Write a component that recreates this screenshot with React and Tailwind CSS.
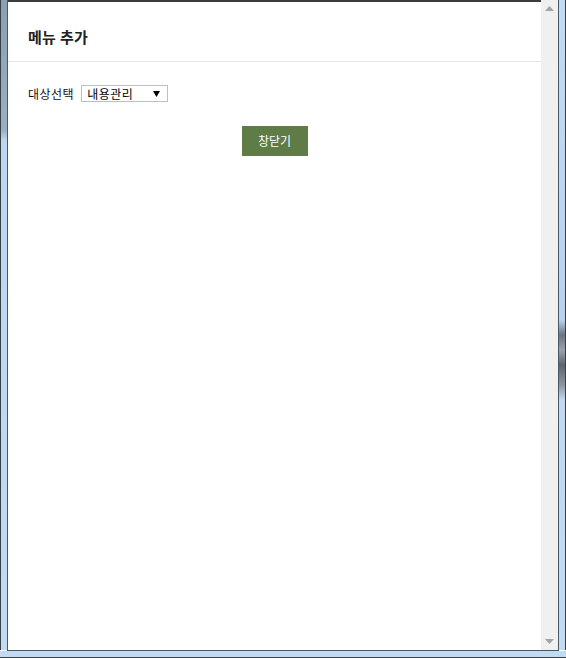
export default function App() {
  const font = { fontFamily: '"Noto Sans CJK KR", "Noto Sans", sans-serif' };
  return (
    <div className="w-[566px] h-[658px] flex flex-col bg-white overflow-hidden" style={font}>
      <div className="flex flex-1 min-h-0">
        {/* left frame */}
        <div className="w-[8px] flex">
          <div className="w-[1px] bg-[#3a3f45]" />
          <div className="w-[6px] bg-[linear-gradient(to_bottom,#8a9fb4_0px,#98afc5_130px,#bcd6f1_140px,#c2dbf4_100%)]" />
          <div className="w-[1px] bg-[#4a5866]" />
        </div>
        {/* content */}
        <div className="flex-1 flex flex-col min-w-0">
          <div className="h-[2px] bg-[#3c3c3c]" />
          <div className="h-[60px] flex items-center pl-[20px] pt-[12px] border-b border-[#e5e5e5]">
            <span className="text-[15px] font-bold text-[#222] tracking-[0.3px]">메뉴 추가</span>
          </div>
          <div className="flex items-center pl-[20px] mt-[22px] gap-[7px]">
            <span className="text-[12px] text-[#111] tracking-[0.5px] pt-[1px]">대상선택</span>
            <div className="w-[87px] h-[17px] border border-[#b5c1cc] bg-white flex items-center justify-between pl-[5px] pr-[7px]">
              <span className="text-[12px] text-black leading-none tracking-[0.5px]">내용관리</span>
              <svg width="7" height="6" viewBox="0 0 7 6"><path d="M0 0 L7 0 L3.5 6 Z" fill="#000" /></svg>
            </div>
          </div>
          <div className="flex justify-center mt-[23px]">
            <div className="w-[66px] h-[30px] bg-[#5f7b46] text-white text-[12px] flex items-center justify-center">
              창닫기
            </div>
          </div>
        </div>
        {/* scrollbar */}
        <div className="w-[17px] bg-[#f0f0f0] flex flex-col items-center justify-between pt-[6px] pb-[6px]">
          <svg width="9" height="5" viewBox="0 0 9 5"><path d="M4.5 0 L9 5 L0 5 Z" fill="#a3a3a3" /></svg>
          <svg width="9" height="5" viewBox="0 0 9 5"><path d="M0 0 L9 0 L4.5 5 Z" fill="#a3a3a3" /></svg>
        </div>
        {/* right frame */}
        <div className="w-[8px] flex">
          <div className="w-[1px] bg-[#4a5866]" />
          <div className="w-[6px] bg-[linear-gradient(to_bottom,#c2dbf4_0px,#b8d2ee_320px,#6c7480_335px,#9aa2ad_350px,#5d646e_365px,#8d95a0_385px,#c0d8f2_400px,#c2dbf4_100%)]" />
          <div className="w-[1px] bg-[#3a3f45]" />
        </div>
      </div>
      {/* bottom frame */}
      <div className="h-[8px] flex flex-col">
        <div className="h-[1px] bg-[#4a5866] mx-[7px]" />
        <div className="h-[6px] bg-[#c2dbf4]" />
        <div className="h-[1px] bg-[#3a3f45]" />
      </div>
    </div>
  );
}
